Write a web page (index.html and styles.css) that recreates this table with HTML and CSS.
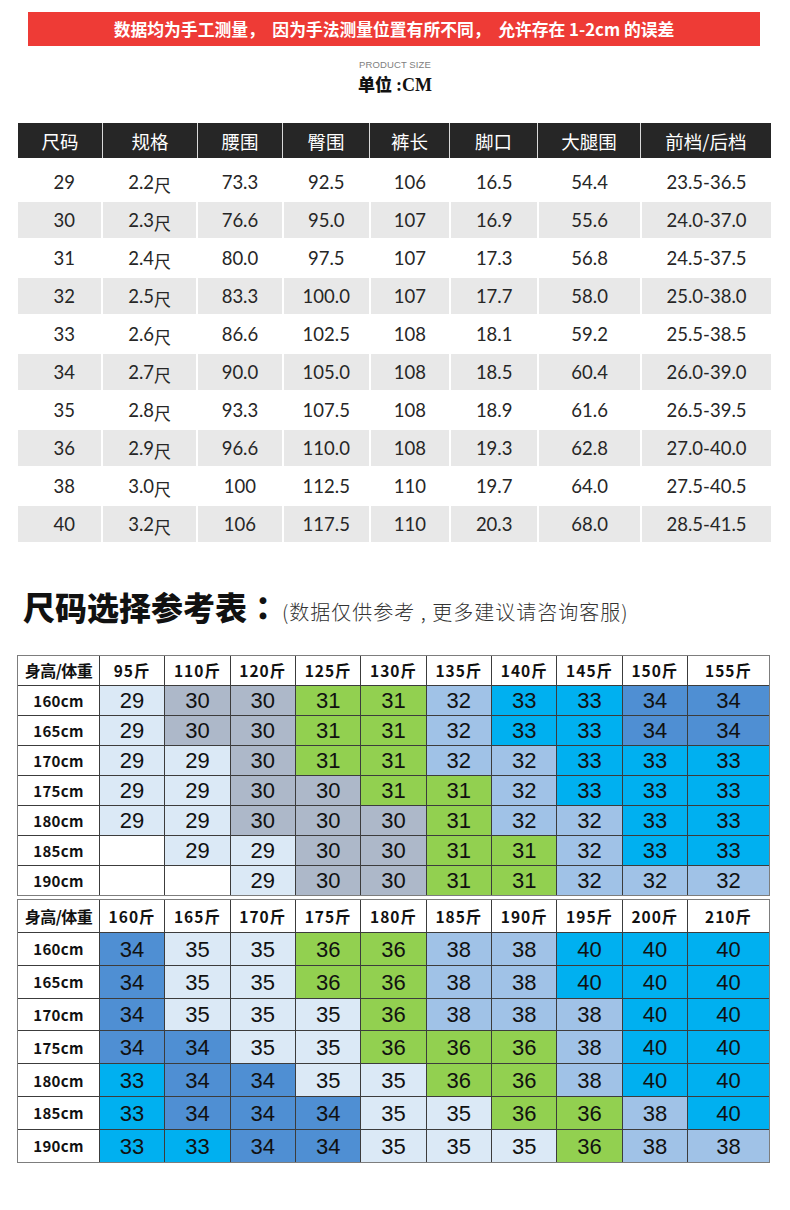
FILE: index.html
```html
<!DOCTYPE html>
<html lang="zh">
<head>
<meta charset="utf-8">
<title>尺码表</title>
<link rel="stylesheet" href="styles.css">
</head>
<body>
<div class="banner">数据均为手工测量，&nbsp; 因为手法测量位置有所不同，&nbsp; 允许存在 1-2cm 的误差</div>
<div class="ps">PRODUCT SIZE</div>
<div class="unit">单位 <span class="cm">:CM</span></div>

<div class="t1">
  <div class="t1-head"><div>尺码</div><div>规格</div><div>腰围</div><div>臀围</div><div>裤长</div><div>脚口</div><div>大腿围</div><div>前档/后档</div></div>
  <div class="t1-row"><div class="first">29</div><div>2.2<span class="chi">尺</span></div><div>73.3</div><div>92.5</div><div>106</div><div>16.5</div><div>54.4</div><div>23.5-36.5</div></div>
  <div class="t1-row alt"><div class="first">30</div><div>2.3<span class="chi">尺</span></div><div>76.6</div><div>95.0</div><div>107</div><div>16.9</div><div>55.6</div><div>24.0-37.0</div></div>
  <div class="t1-row"><div class="first">31</div><div>2.4<span class="chi">尺</span></div><div>80.0</div><div>97.5</div><div>107</div><div>17.3</div><div>56.8</div><div>24.5-37.5</div></div>
  <div class="t1-row alt"><div class="first">32</div><div>2.5<span class="chi">尺</span></div><div>83.3</div><div>100.0</div><div>107</div><div>17.7</div><div>58.0</div><div>25.0-38.0</div></div>
  <div class="t1-row"><div class="first">33</div><div>2.6<span class="chi">尺</span></div><div>86.6</div><div>102.5</div><div>108</div><div>18.1</div><div>59.2</div><div>25.5-38.5</div></div>
  <div class="t1-row alt"><div class="first">34</div><div>2.7<span class="chi">尺</span></div><div>90.0</div><div>105.0</div><div>108</div><div>18.5</div><div>60.4</div><div>26.0-39.0</div></div>
  <div class="t1-row"><div class="first">35</div><div>2.8<span class="chi">尺</span></div><div>93.3</div><div>107.5</div><div>108</div><div>18.9</div><div>61.6</div><div>26.5-39.5</div></div>
  <div class="t1-row alt"><div class="first">36</div><div>2.9<span class="chi">尺</span></div><div>96.6</div><div>110.0</div><div>108</div><div>19.3</div><div>62.8</div><div>27.0-40.0</div></div>
  <div class="t1-row"><div class="first">38</div><div>3.0<span class="chi">尺</span></div><div>100</div><div>112.5</div><div>110</div><div>19.7</div><div>64.0</div><div>27.5-40.5</div></div>
  <div class="t1-row alt"><div class="first">40</div><div>3.2<span class="chi">尺</span></div><div>106</div><div>117.5</div><div>110</div><div>20.3</div><div>68.0</div><div>28.5-41.5</div></div>
</div>

<div class="title"><span class="big">尺码选择参考表</span><span class="colon">：</span><span class="sub">(数据仅供参考 , 更多建议请咨询客服)</span></div>

<div class="t2 block1">
  <div class="h lead">身高/体重</div><div class="h">95斤</div><div class="h">110斤</div><div class="h">120斤</div><div class="h">125斤</div><div class="h">130斤</div><div class="h">135斤</div><div class="h">140斤</div><div class="h">145斤</div><div class="h">150斤</div><div class="h">155斤</div>

  <div class="rh">160cm</div><div class="v29">29</div><div class="v30">30</div><div class="v30">30</div><div class="v31">31</div><div class="v31">31</div><div class="v32">32</div><div class="v33">33</div><div class="v33">33</div><div class="v34">34</div><div class="v34">34</div>
  <div class="rh">165cm</div><div class="v29">29</div><div class="v30">30</div><div class="v30">30</div><div class="v31">31</div><div class="v31">31</div><div class="v32">32</div><div class="v33">33</div><div class="v33">33</div><div class="v34">34</div><div class="v34">34</div>
  <div class="rh">170cm</div><div class="v29">29</div><div class="v29">29</div><div class="v30">30</div><div class="v31">31</div><div class="v31">31</div><div class="v32">32</div><div class="v32">32</div><div class="v33">33</div><div class="v33">33</div><div class="v33">33</div>
  <div class="rh">175cm</div><div class="v29">29</div><div class="v29">29</div><div class="v30">30</div><div class="v30">30</div><div class="v31">31</div><div class="v31">31</div><div class="v32">32</div><div class="v33">33</div><div class="v33">33</div><div class="v33">33</div>
  <div class="rh">180cm</div><div class="v29">29</div><div class="v29">29</div><div class="v30">30</div><div class="v30">30</div><div class="v30">30</div><div class="v31">31</div><div class="v32">32</div><div class="v32">32</div><div class="v33">33</div><div class="v33">33</div>
  <div class="rh">185cm</div><div class="empty"></div><div class="v29">29</div><div class="v29">29</div><div class="v30">30</div><div class="v30">30</div><div class="v31">31</div><div class="v31">31</div><div class="v32">32</div><div class="v33">33</div><div class="v33">33</div>
  <div class="rh">190cm</div><div class="empty"></div><div class="empty"></div><div class="v29">29</div><div class="v30">30</div><div class="v30">30</div><div class="v31">31</div><div class="v31">31</div><div class="v32">32</div><div class="v32">32</div><div class="v32">32</div>
</div>

<div class="t2 block2">
  <div class="h lead">身高/体重</div><div class="h">160斤</div><div class="h">165斤</div><div class="h">170斤</div><div class="h">175斤</div><div class="h">180斤</div><div class="h">185斤</div><div class="h">190斤</div><div class="h">195斤</div><div class="h">200斤</div><div class="h">210斤</div>

  <div class="rh">160cm</div><div class="v34">34</div><div class="v35">35</div><div class="v35">35</div><div class="v36">36</div><div class="v36">36</div><div class="v38">38</div><div class="v38">38</div><div class="v40">40</div><div class="v40">40</div><div class="v40">40</div>
  <div class="rh">165cm</div><div class="v34">34</div><div class="v35">35</div><div class="v35">35</div><div class="v36">36</div><div class="v36">36</div><div class="v38">38</div><div class="v38">38</div><div class="v40">40</div><div class="v40">40</div><div class="v40">40</div>
  <div class="rh">170cm</div><div class="v34">34</div><div class="v35">35</div><div class="v35">35</div><div class="v35">35</div><div class="v36">36</div><div class="v38">38</div><div class="v38">38</div><div class="v38">38</div><div class="v40">40</div><div class="v40">40</div>
  <div class="rh">175cm</div><div class="v34">34</div><div class="v34">34</div><div class="v35">35</div><div class="v35">35</div><div class="v36">36</div><div class="v36">36</div><div class="v36">36</div><div class="v38">38</div><div class="v40">40</div><div class="v40">40</div>
  <div class="rh">180cm</div><div class="v33">33</div><div class="v34">34</div><div class="v34">34</div><div class="v35">35</div><div class="v35">35</div><div class="v36">36</div><div class="v36">36</div><div class="v38">38</div><div class="v40">40</div><div class="v40">40</div>
  <div class="rh">185cm</div><div class="v33">33</div><div class="v34">34</div><div class="v34">34</div><div class="v34">34</div><div class="v35">35</div><div class="v35">35</div><div class="v36">36</div><div class="v36">36</div><div class="v38">38</div><div class="v40">40</div>
  <div class="rh">190cm</div><div class="v33">33</div><div class="v33">33</div><div class="v34">34</div><div class="v34">34</div><div class="v35">35</div><div class="v35">35</div><div class="v35">35</div><div class="v36">36</div><div class="v38">38</div><div class="v38">38</div>
</div>
</body>
</html>
```
FILE: styles.css
```css
* { box-sizing: border-box; }
html, body { margin: 0; padding: 0; background: #fff; }
body {
  width: 790px;
  font-family: "Noto Sans CJK SC", "Noto Sans", sans-serif;
  color: #222;
}

.banner {
  margin: 12px 30px 0 28px;
  height: 34px;
  background: #ee3b36;
  color: #fff;
  font-weight: 700;
  font-size: 16.8px;
  display: flex;
  align-items: center;
  justify-content: center;
  white-space: pre;
}

.ps {
  margin-top: 14px;
  text-align: center;
  font-family: "Liberation Sans", sans-serif;
  font-size: 9.5px;
  line-height: 10px;
  color: #808080;
  letter-spacing: 0.1px;
}

.unit {
  margin-top: 4px;
  text-align: center;
  font-size: 17px;
  line-height: 20px;
  font-weight: 900;
  color: #111;
}
.unit .cm {
  font-family: "Liberation Serif", serif;
  font-weight: 700;
  font-size: 18px;
}

/* ---------- table 1 ---------- */
.t1 {
  margin: 28px 19px 0 18px;
  display: flex;
  flex-direction: column;
  gap: 2px;
}
.t1-head, .t1-row {
  display: grid;
  grid-template-columns: 83.4fr 92.7fr 84fr 84.7fr 78.7fr 86fr 101fr 129fr;
}
.t1-head {
  height: 35px;
  column-gap: 1px;
  background: #d9d9d9;
  margin-bottom: 4px;
}
.t1-head div {
  background: #262626;
  color: #fff;
  font-size: 18.5px;
  display: flex;
  align-items: center;
  justify-content: center;
}
.t1-row {
  height: 36px;
  column-gap: 2px;
}
.t1-row div {
  font-family: "Lato", "Noto Sans CJK SC", sans-serif;
  font-weight: 400;
  font-size: 18.5px;
  color: #262626;
  display: flex;
  align-items: center;
  justify-content: center;
}
.t1-row div.first { padding-left: 9px; }
.t1-row.alt div { background: #e8e8e8; }
.t1-row .chi {
  font-family: "Noto Sans CJK SC", sans-serif;
  font-weight: 400;
  font-size: 17px;
  position: relative;
  top: 2px;
}

/* ---------- title ---------- */
.title {
  margin: 41px 0 0 23px;
  height: 42px;
  display: flex;
  align-items: baseline;
  white-space: nowrap;
}
.title .big {
  font-size: 32px;
  font-weight: 900;
  color: #111;
  line-height: 42px;
}
.title .colon {
  font-family: "Noto Sans CJK TC", sans-serif;
  font-size: 32px;
  font-weight: 900;
  color: #111;
}
.title .sub {
  margin-left: 3px;
  font-size: 20px;
  font-weight: 300;
  letter-spacing: 1px;
  color: #333;
}

/* ---------- table 2 ---------- */
.t2 {
  margin: 30px 20px 0 17px;
  display: grid;
  grid-template-columns: 81.2fr repeat(9, 64.6fr) 81.2fr;
  gap: 1px;
  background: #3c3c3c;
  border: 1.5px solid #7d7d7d;
}
.t2.block1 { grid-template-rows: 28.5px repeat(7, 29px); }
.t2.block2 {
  margin-top: 3px;
  grid-template-rows: 32.5px repeat(7, 31.8px);
}
.t2 > div {
  display: flex;
  align-items: center;
  justify-content: center;
  background: #fff;
  font-family: "Liberation Sans", "Noto Sans CJK SC", sans-serif;
  font-size: 22px;
  color: #111;
  padding-top: 2px;
}
.t2 .h, .t2 .rh {
  font-family: "Noto Sans CJK SC", sans-serif;
  font-weight: 700;
  font-size: 15.5px;
  letter-spacing: 1px;
  padding-top: 0;
}
.t2 .h.lead { letter-spacing: -0.6px; font-size: 16px; }
.t2 .rh { letter-spacing: 0.3px; font-size: 15px; }

.t2 .v29, .t2 .v35 { background: #dbe9f6; }
.t2 .v30 { background: #adb8c9; }
.t2 .v31, .t2 .v36 { background: #92d050; }
.t2 .v32, .t2 .v38 { background: #a0c2e7; }
.t2 .v33, .t2 .v40 { background: #00b0f0; }
.t2 .v34 { background: #4f8fd3; }
.t2 .empty { background: #fff; }
```
